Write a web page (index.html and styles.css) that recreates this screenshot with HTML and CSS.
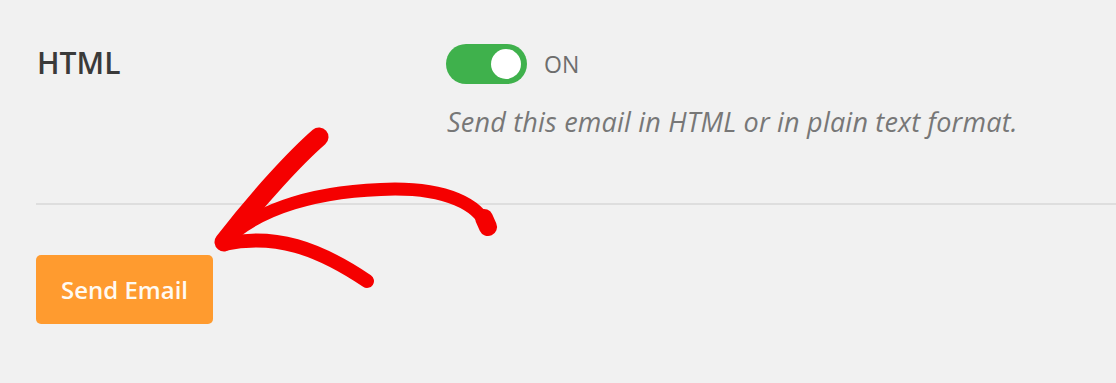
FILE: index.html
```html
<!DOCTYPE html>
<html>
<head>
<meta charset="utf-8">
<link rel="stylesheet" href="styles.css">
</head>
<body>
<div class="page">
  <div class="row">
    <div class="label">HTML</div>
    <div class="field">
      <div class="toggle-line">
        <span class="toggle"><span class="knob"></span></span>
        <span class="state">ON</span>
      </div>
      <p class="desc">Send this email in HTML or in plain text format.</p>
    </div>
  </div>
  <hr class="divider">
  <div class="actions">
    <button class="btn">Send Email</button>
  </div>
  <svg class="arrow" width="1116" height="383" viewBox="0 0 1116 383">
    <g fill="none" stroke="#f50000" stroke-linecap="round" stroke-linejoin="round">
      <path d="M319,137 C296,157 258,198 224,242" stroke-width="19"/>
      <path d="M224,242 C258,208 318,190 395,189 C446,189 478,204 487,226" stroke-width="13"/>
      <path d="M484,218 L488,227" stroke-width="18"/>
      <path d="M224,244 C275,233 318,248 367,281" stroke-width="14"/>
    </g>
  </svg>
</div>
</body>
</html>
```
FILE: styles.css
```css
html, body {
  margin: 0;
  padding: 0;
  background: #f1f1f1;
}
.page {
  position: relative;
  width: 1116px;
  height: 383px;
  overflow: hidden;
  font-family: "Open Sans", "Liberation Sans", sans-serif;
}
.row {
  display: flex;
  padding: 44px 0 0 37px;
}
.label {
  width: 409px;
  font-size: 30px;
  font-weight: 600;
  color: #3a3a3a;
  line-height: 40px;
  margin-top: -1px;
}
.field {
  display: flex;
  flex-direction: column;
}
.toggle-line {
  display: flex;
  align-items: center;
  height: 40px;
}
.toggle {
  display: flex;
  align-items: center;
  justify-content: flex-end;
  box-sizing: border-box;
  width: 81px;
  height: 40px;
  border-radius: 20px;
  background: #3fb14c;
  padding-right: 6px;
}
.knob {
  width: 30px;
  height: 30px;
  border-radius: 50%;
  background: #ffffff;
}
.state {
  margin-left: 17px;
  font-size: 23px;
  color: #6d6d6d;
  line-height: 40px;
}
.desc {
  margin: 20px 0 0 1px;
  font-size: 27px;
  font-style: italic;
  color: #777777;
  line-height: 36px;
  letter-spacing: 0.2px;
}
.divider {
  margin: 63px 0 0 36px;
  border: 0;
  height: 2px;
  background: #dedede;
}
.actions {
  padding: 50px 0 0 36px;
}
.btn {
  width: 177px;
  height: 69px;
  border: 0;
  border-radius: 5px;
  background: #ff9b2f;
  color: #fffaf2;
  font-family: "Open Sans", "Liberation Sans", sans-serif;
  font-size: 24px;
  font-weight: 600;
  padding: 0;
}
.arrow {
  position: absolute;
  left: 0;
  top: 0;
}
```
